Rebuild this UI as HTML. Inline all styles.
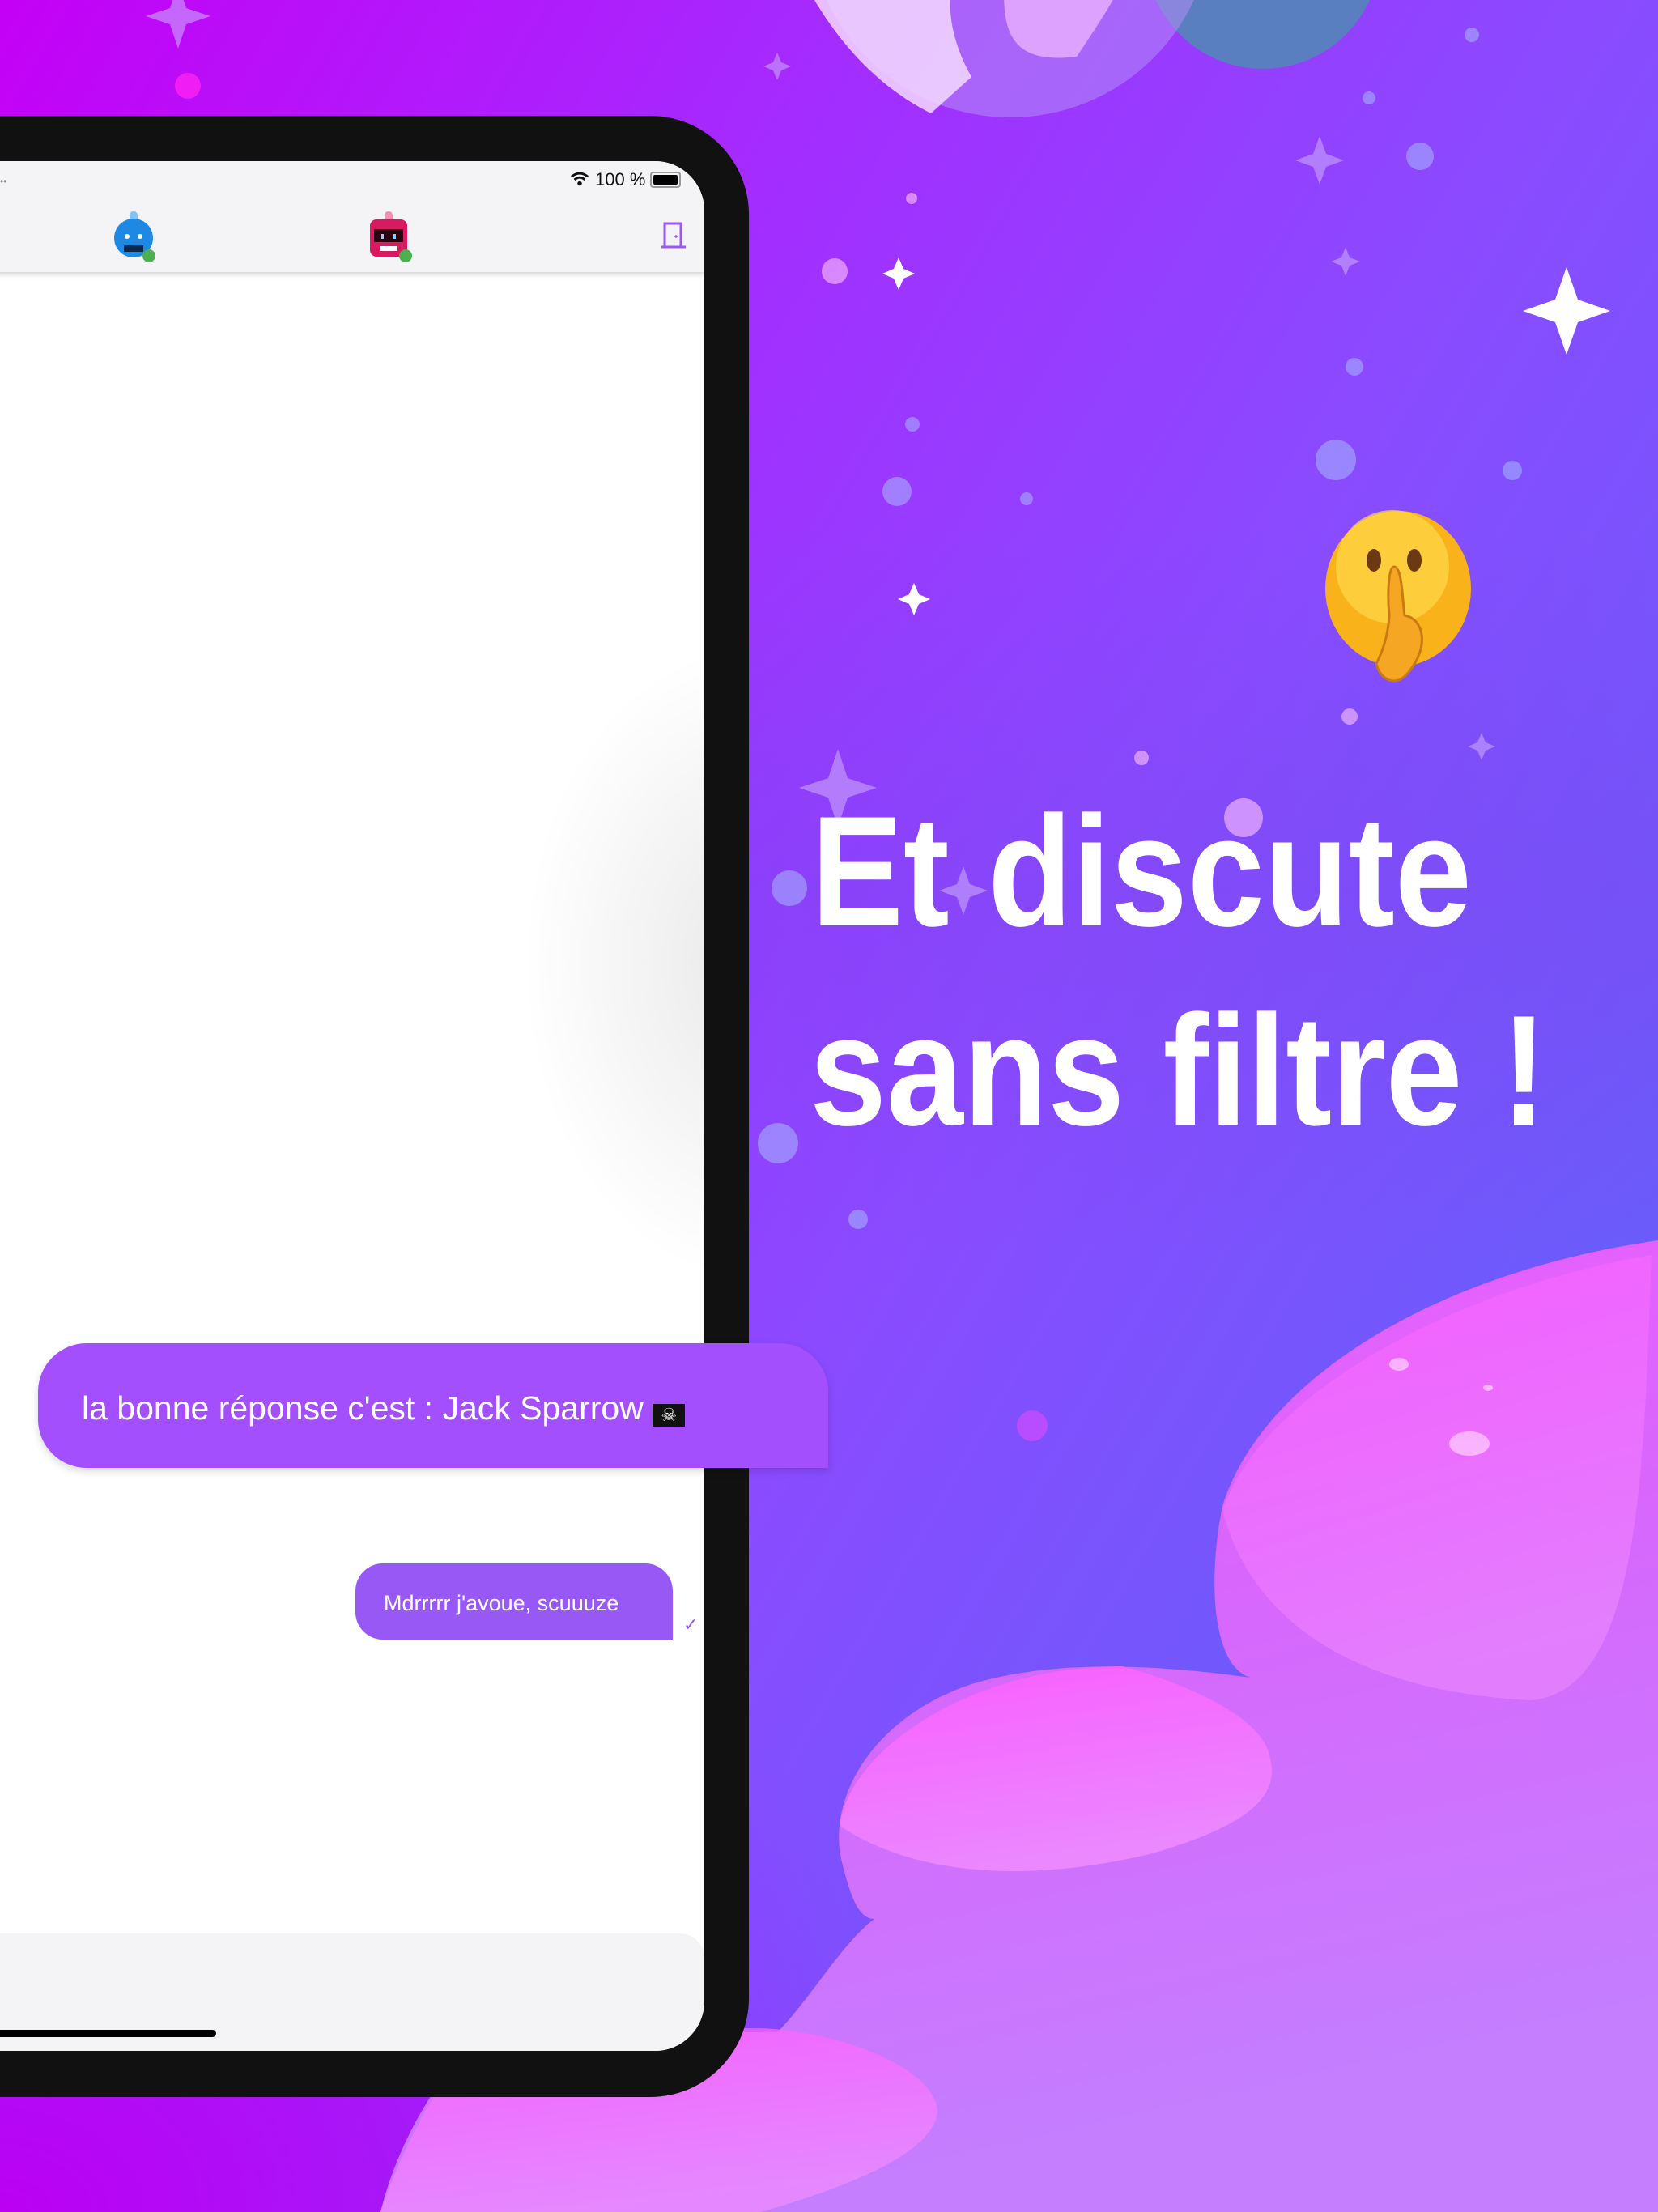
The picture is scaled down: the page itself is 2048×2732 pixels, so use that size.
<!DOCTYPE html>
<html><head><meta charset="utf-8"><style>
html,body{margin:0;padding:0}
body{width:2048px;height:2732px;position:relative;overflow:hidden;font-family:"Liberation Sans",sans-serif;
background:linear-gradient(120deg,#c400f6 0%,#a32dff 30%,#8a4bff 55%,#6a5cfb 80%,#6160f5 100%);}
.abs{position:absolute}
</style></head><body>
<svg class="abs" style="left:0;top:0" width="2048" height="2732" viewBox="0 0 2048 2732">
<defs>
<radialGradient id="bl" cx="0" cy="1" r="1"><stop offset="0" stop-color="#bb00f4"/><stop offset="0.5" stop-color="#b300f5" stop-opacity="0.6"/><stop offset="1" stop-color="#9a3dff" stop-opacity="0"/></radialGradient>
<linearGradient id="pk" x1="0" y1="0" x2="0.3" y2="1"><stop offset="0" stop-color="#f45bff"/><stop offset="0.5" stop-color="#d866fd"/><stop offset="1" stop-color="#c47efe"/></linearGradient>
<linearGradient id="pk2" x1="0" y1="0" x2="0.3" y2="1"><stop offset="0" stop-color="#ff5cff"/><stop offset="1" stop-color="#f08cff"/></linearGradient>
<linearGradient id="mid" x1="0" y1="0" x2="0" y2="1"><stop offset="0" stop-color="#7a44ee" stop-opacity="0"/><stop offset="0.5" stop-color="#7a44ee" stop-opacity="0.35"/><stop offset="1" stop-color="#7a44ee" stop-opacity="0"/></linearGradient>
</defs>
<rect x="0" y="650" width="2048" height="900" fill="url(#mid)"/>
<rect x="0" y="1900" width="1300" height="832" fill="url(#bl)"/>
<!-- planets -->
<circle cx="1560" cy="-60" r="145" fill="#5a7fc0"/>
<circle cx="1248" cy="-105" r="250" fill="#b38cf5" opacity="0.55"/>
<path d="M1000,-10 C1040,60 1090,110 1150,140 L1200,95 C1180,60 1170,20 1175,-10 Z" fill="#f5d8ff" opacity="0.85"/>
<path d="M1240,-10 C1240,40 1250,80 1330,70 C1350,40 1370,10 1380,-10 Z" fill="#eab0ff" opacity="0.8"/>
<circle cx="232" cy="106" r="16" fill="#f01ef5"/>
<!-- stars -->
<g fill="#fff">
<path d="M1110,318 l6,14 14,6 -14,6 -6,14 -6,-14 -14,-6 14,-6z"/>
<path d="M1935,330 l14,40 40,14 -40,14 -14,40 -14,-40 -40,-14 40,-14z"/>
<path d="M1129,720 l6,14 14,6 -14,6 -6,14 -6,-14 -14,-6 14,-6z"/>
<path d="M1195,2195 q22,8 44,0 q-8,20 0,42 q-22,-8 -44,0 q8,-22 0,-42z"/>
</g>
<g fill="#c9a5ff" opacity="0.6">
<path d="M1630,168 l8,22 22,8 -22,8 -8,22 -8,-22 -22,-8 22,-8z"/>
<path d="M1035,925 l12,36 36,12 -36,12 -12,36 -12,-36 -36,-12 36,-12z"/>
<path d="M1190,1070 l8,22 22,8 -22,8 -8,22 -8,-22 -22,-8 22,-8z"/>
<path d="M220,-20 l10,30 30,10 -30,10 -10,30 -10,-30 -30,-10 30,-10z"/>
<path d="M960,65 l5,12 12,5 -12,5 -5,12 -5,-12 -12,-5 12,-5z"/>
<path d="M1662,305 l5,13 13,5 -13,5 -5,13 -5,-13 -13,-5 13,-5z"/>
<path d="M1830,905 l5,12 12,5 -12,5 -5,12 -5,-12 -12,-5 12,-5z"/>
</g>
<g fill="#ffc3ff" opacity="0.6">
<circle cx="1031" cy="335" r="16"/><circle cx="1126" cy="245" r="7"/><circle cx="1667" cy="885" r="10"/><circle cx="1410" cy="936" r="9"/><circle cx="1536" cy="1010" r="24"/>
</g>
<g fill="#a9c4ff" opacity="0.5">
<circle cx="1673" cy="453" r="11"/><circle cx="1650" cy="568" r="25"/><circle cx="1868" cy="581" r="12"/><circle cx="1127" cy="524" r="9"/><circle cx="1268" cy="616" r="8"/><circle cx="1108" cy="607" r="18"/><circle cx="1754" cy="193" r="17"/><circle cx="1691" cy="121" r="8"/><circle cx="975" cy="1097" r="22"/><circle cx="961" cy="1412" r="25"/><circle cx="1060" cy="1506" r="12"/><circle cx="1818" cy="43" r="9"/>
</g>
<circle cx="1275" cy="1761" r="19" fill="#b84dff"/>
<!-- pink blobs -->
<path d="M2048,1532 C1780,1570 1560,1700 1510,1860 C1490,1960 1500,2060 1545,2072 C1420,2055 1300,2050 1200,2080 C1080,2120 1020,2220 1040,2300 C1050,2340 1060,2370 1080,2370 C1040,2400 1000,2470 960,2510 L600,2510 C540,2560 490,2650 470,2732 L2048,2732 Z" fill="url(#pk)"/>
<path d="M2040,1550 C1800,1590 1560,1720 1510,1865 C1550,2020 1700,2090 1890,2100 C2030,2090 2030,1800 2040,1550 Z" fill="url(#pk2)" opacity="0.55"/>
<path d="M1387,2058 C1200,2058 1050,2160 1037,2255 C1120,2310 1250,2330 1420,2290 C1560,2250 1580,2210 1568,2168 C1555,2110 1430,2070 1387,2058 Z" fill="url(#pk2)" opacity="0.85"/>
<path d="M940,2505 C1050,2510 1160,2560 1158,2610 C1150,2660 1050,2700 940,2732 L470,2732 C500,2640 560,2540 600,2505 Z" fill="url(#pk2)" opacity="0.75"/>
<g fill="#ffd0ff" opacity="0.7"><ellipse cx="1728" cy="1685" rx="12" ry="8"/><ellipse cx="1838" cy="1714" rx="6" ry="4"/><ellipse cx="1815" cy="1783" rx="25" ry="15"/></g>
<!-- emoji -->
<ellipse cx="1727" cy="727" rx="90" ry="96" fill="#f9b21a"/>
<ellipse cx="1720" cy="700" rx="70" ry="70" fill="#ffd84a" opacity="0.7"/>
<ellipse cx="1697" cy="692" rx="9" ry="14" fill="#6b3a12"/><ellipse cx="1747" cy="692" rx="9" ry="14" fill="#6b3a12"/>
<path d="M1722,700 C1732,700 1732,740 1735,760 C1760,765 1765,800 1740,830 C1725,850 1705,840 1700,820 C1710,800 1715,780 1716,760 C1714,740 1714,700 1722,700Z" fill="#f5a623" stroke="#c97a10" stroke-width="3"/>
</svg>

<!-- device frame -->
<div class="abs" style="left:-200px;top:143px;width:1125px;height:2447px;background:#111;border-radius:0 122px 122px 0"></div>
<div class="abs" style="left:-100px;top:199px;width:970px;height:2334px;background:#fff;border-radius:0 61px 61px 0;overflow:hidden">
  <div class="abs" style="left:0;top:0;width:970px;height:137px;background:#f4f4f6;box-shadow:0 3px 6px rgba(0,0,0,0.18)"></div>
  <div class="abs" style="left:100px;top:18px;font-size:12px;color:#888">••</div>
  <svg class="abs" style="left:804px;top:12px" width="24" height="20" viewBox="0 0 26 20"><path d="M2,7 Q13,-2 24,7" stroke="#111" stroke-width="3" fill="none"/><path d="M6,11 Q13,5 20,11" stroke="#111" stroke-width="3" fill="none"/><circle cx="13" cy="16" r="3" fill="#111"/></svg>
  <div class="abs" style="left:835px;top:10px;font-size:22px;color:#111">100 %</div>
  <div class="abs" style="left:903px;top:13px;width:34px;height:16px;border:2px solid #999;border-radius:4px"><div style="margin:2px;height:12px;background:#000;border-radius:2px"></div></div>
  <!-- blue robot -->
  <svg class="abs" style="left:235px;top:60px" width="70" height="70" viewBox="0 0 70 70">
    <path d="M30,2 q5,0 5,6 l0,6 -10,0 0,-6 q0,-6 5,-6z" fill="#7cc2ff"/>
    <ellipse cx="30" cy="35" rx="24" ry="24" fill="#1e88e5"/>
    <circle cx="22" cy="33" r="3" fill="#fff"/><circle cx="38" cy="33" r="3" fill="#fff"/>
    <rect x="18" y="44" width="24" height="8" fill="#0b2a4a"/>
    <circle cx="49" cy="57" r="8" fill="#4caf50"/>
  </svg>
  <!-- red robot -->
  <svg class="abs" style="left:551px;top:60px" width="70" height="70" viewBox="0 0 70 70">
    <path d="M29,2 q5,0 5,6 l0,6 -10,0 0,-6 q0,-6 5,-6z" fill="#f48fb1"/>
    <rect x="6" y="12" width="46" height="46" rx="8" fill="#d81b60"/>
    <rect x="11" y="24" width="36" height="16" fill="#2a0010"/>
    <rect x="20" y="30" width="3" height="6" fill="#8ecbff"/><rect x="35" y="30" width="3" height="6" fill="#8ecbff"/>
    <rect x="18" y="45" width="22" height="6" fill="#fff"/>
    <circle cx="50" cy="57" r="8" fill="#4caf50"/>
  </svg>
  <!-- door -->
  <svg class="abs" style="left:915px;top:74px" width="34" height="36" viewBox="0 0 34 36"><path d="M6,3 h20 v29 h-20z M2,32 h30" stroke="#9b57f8" stroke-width="3" fill="none"/><circle cx="20" cy="19" r="1.8" fill="#9b57f8"/></svg>
  <!-- gray shadow blob -->
  <div class="abs" style="left:720px;top:560px;width:420px;height:860px;background:radial-gradient(ellipse at 75% 50%,rgba(0,0,0,0.09),rgba(0,0,0,0) 65%)"></div>
  <!-- sent bubble -->
  <div class="abs" style="left:539px;top:1732px;width:392px;height:94px;background:#9758f5;border-radius:34px 34px 0 34px"></div>
  <div class="abs" style="left:574px;top:1766px;font-size:27px;color:#fff;white-space:nowrap">Mdrrrrr j'avoue, scuuuze</div>
  <div class="abs" style="left:944px;top:1795px;font-size:22px;color:#9758f5">✓</div>
  <!-- input bar -->
  <div class="abs" style="left:0;top:2189px;width:970px;height:160px;background:#f4f4f6;border-radius:0 30px 0 0"></div>
  <div class="abs" style="left:0;top:2308px;width:367px;height:9px;background:#000;border-radius:5px"></div>
</div>
<!-- big bubble overflowing -->
<div class="abs" style="left:47px;top:1659px;width:976px;height:154px;background:#a34ffe;border-radius:60px 60px 0 60px;box-shadow:0 4px 10px rgba(0,0,0,0.15)"></div>
<div class="abs" style="left:101px;top:1716px;font-size:41px;color:#fff;white-space:nowrap">la bonne réponse c'est : Jack Sparrow <span style="display:inline-block;width:40px;height:28px;background:#111;vertical-align:-2px;color:#fff;font-size:22px;text-align:center;line-height:28px">☠</span></div>

<!-- headline -->
<div class="abs" style="left:1002px;top:980px;font-size:194px;font-weight:bold;color:#fff;white-space:nowrap;transform:scaleX(0.88);transform-origin:left top;line-height:1">Et discute</div>
<div class="abs" style="left:1000px;top:1226px;font-size:194px;font-weight:bold;color:#fff;white-space:nowrap;transform:scaleX(0.88);transform-origin:left top;line-height:1">sans filtre !</div>
</body></html>
